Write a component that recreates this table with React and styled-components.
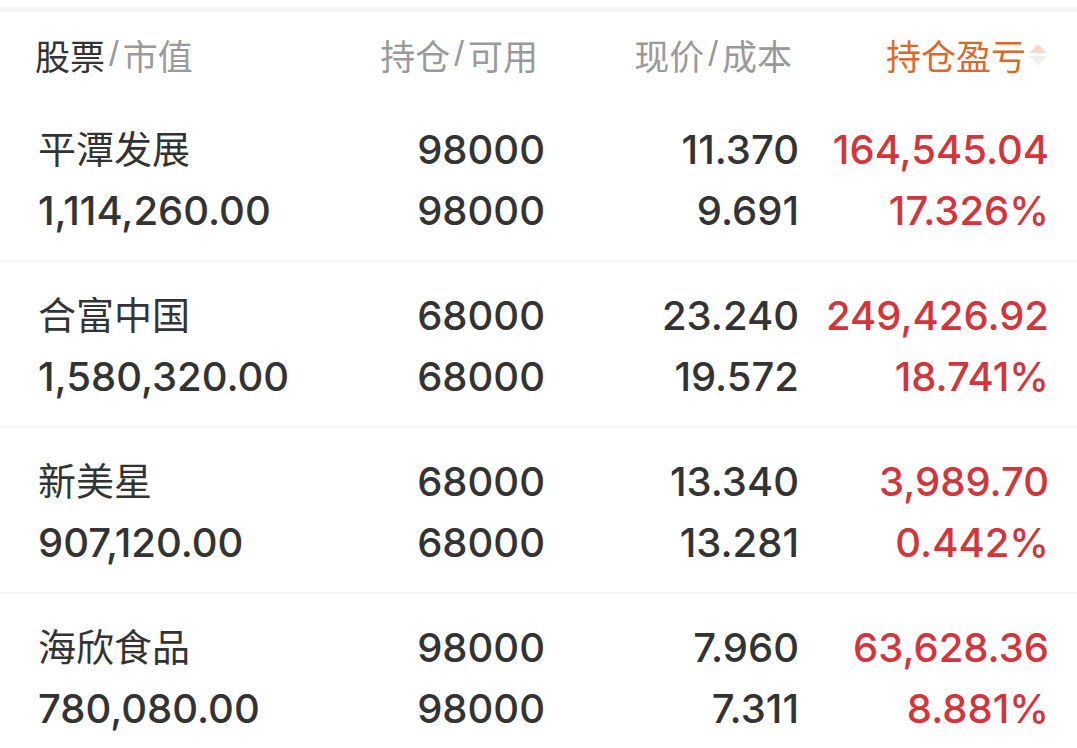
import React from "react";
import styled, { createGlobalStyle } from "styled-components";

const GlobalStyle = createGlobalStyle`
  body {
    margin: 0;
    background: #fff;
    font-family: "Noto Sans CJK SC", sans-serif;
  }
`;

const Page = styled.div`
  width: 1077px;
  height: 748px;
  overflow: hidden;
  background: #fff;
  padding-top: 7px;
  box-sizing: border-box;
`;

const TopBand = styled.div`
  height: 5px;
  background: #f4f5f7;
`;

const Grid = styled.div`
  display: grid;
  grid-template-columns: 300px 207px 254px 250px;
  padding: 0 28px 0 38px;
`;

const Header = styled(Grid)`
  height: 84px;
  box-sizing: border-box;
  align-items: center;
  font-size: 35px;
  color: #9a9a9a;
`;

const HeadCell = styled.div`
  display: flex;
  align-items: center;
  justify-content: ${(p) => (p.$left ? "flex-start" : "flex-end")};
  padding-right: ${(p) => (p.$left ? 0 : p.$pad || 7)}px;
  margin-left: ${(p) => (p.$left ? -3 : 0)}px;
  color: ${(p) => (p.$active ? "#d9692e" : "#9a9a9a")};
  white-space: nowrap;
`;

const Strong = styled.span`
  color: #333;
`;

const Slash = styled.span`
  margin: 0 4px;
  font-family: "Liberation Sans", sans-serif;
`;

const SortArrows = styled.span`
  display: inline-flex;
  flex-direction: column;
  gap: 3px;
  margin-left: 3px;
`;

const Tri = styled.span`
  width: 0;
  height: 0;
  border-left: 9px solid transparent;
  border-right: 9px solid transparent;
  ${(p) =>
    p.$up
      ? "border-bottom: 9px solid #f7d9cb;"
      : "border-top: 9px solid #efefef;"}
`;

const Row = styled(Grid)`
  padding-top: 23px;
  padding-bottom: 19px;
  border-bottom: 2px solid #f5f5f5;
  &:last-child {
    border-bottom: none;
  }
`;

const Cell = styled.div`
  display: flex;
  flex-direction: column;
  align-items: ${(p) => (p.$left ? "flex-start" : "flex-end")};
  color: ${(p) => (p.$red ? "#d2353b" : "#333")};
`;

const Line = styled.div`
  height: 61px;
  line-height: ${(p) => (p.$cjk ? "55px" : "61px")};
  white-space: nowrap;
  font-family: ${(p) =>
    p.$cjk ? '"Noto Sans CJK SC", sans-serif' : "Inter, sans-serif"};
  font-size: ${(p) => (p.$cjk ? "38px" : "40px")};
  font-weight: ${(p) => (p.$cjk ? 400 : 500)};
`;

const stocks = [
  {
    name: "平潭发展",
    value: "1,114,260.00",
    hold: "98000",
    avail: "98000",
    price: "11.370",
    cost: "9.691",
    pnl: "164,545.04",
    pct: "17.326%",
  },
  {
    name: "合富中国",
    value: "1,580,320.00",
    hold: "68000",
    avail: "68000",
    price: "23.240",
    cost: "19.572",
    pnl: "249,426.92",
    pct: "18.741%",
  },
  {
    name: "新美星",
    value: "907,120.00",
    hold: "68000",
    avail: "68000",
    price: "13.340",
    cost: "13.281",
    pnl: "3,989.70",
    pct: "0.442%",
  },
  {
    name: "海欣食品",
    value: "780,080.00",
    hold: "98000",
    avail: "98000",
    price: "7.960",
    cost: "7.311",
    pnl: "63,628.36",
    pct: "8.881%",
  },
];

const App = () => {
  return (
    <Page>
      <GlobalStyle />
      <TopBand />
      <Header>
        <HeadCell $left>
          <Strong>股票</Strong>
          <Slash>/</Slash>市值
        </HeadCell>
        <HeadCell>
          持仓<Slash>/</Slash>可用
        </HeadCell>
        <HeadCell>
          现价<Slash>/</Slash>成本
        </HeadCell>
        <HeadCell $active $pad={2}>
          持仓盈亏
          <SortArrows>
            <Tri $up />
            <Tri />
          </SortArrows>
        </HeadCell>
      </Header>
      {stocks.map((s) => (
        <Row key={s.name}>
          <Cell $left>
            <Line $cjk>{s.name}</Line>
            <Line>{s.value}</Line>
          </Cell>
          <Cell>
            <Line>{s.hold}</Line>
            <Line>{s.avail}</Line>
          </Cell>
          <Cell>
            <Line>{s.price}</Line>
            <Line>{s.cost}</Line>
          </Cell>
          <Cell $red>
            <Line>{s.pnl}</Line>
            <Line>{s.pct}</Line>
          </Cell>
        </Row>
      ))}
    </Page>
  );
};

export default App;
